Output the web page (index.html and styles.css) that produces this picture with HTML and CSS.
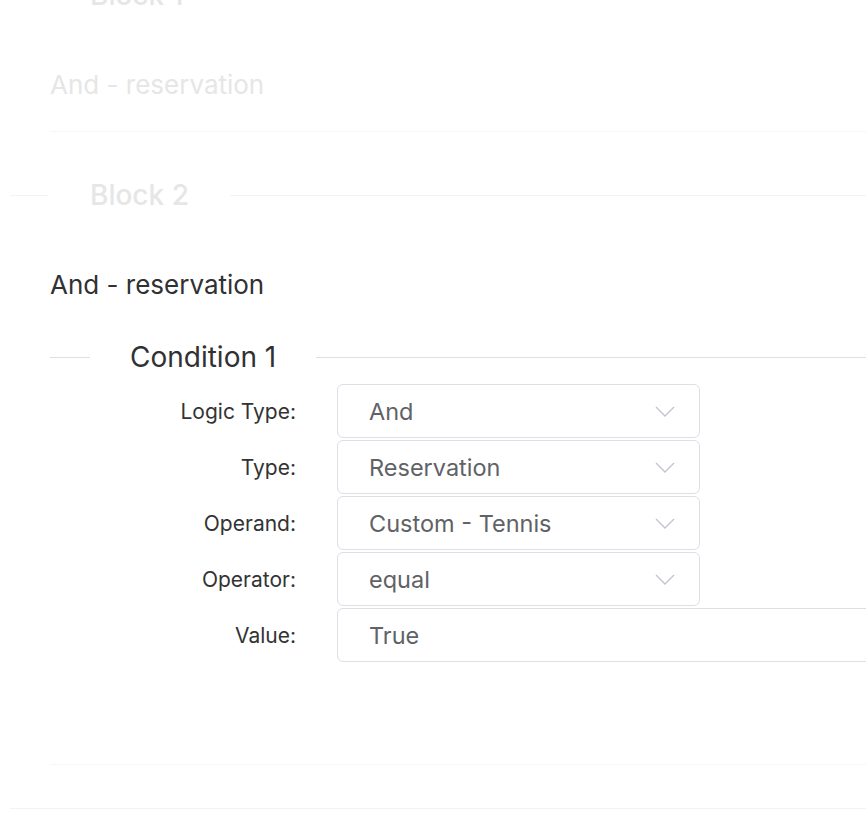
FILE: index.html
```html
<!DOCTYPE html>
<html lang="en">
<head>
<meta charset="utf-8">
<title>Rule blocks</title>
<link rel="stylesheet" href="styles.css">
</head>
<body>
<div class="page">
  <section class="block block-faded block-first">
    <div class="block-divider"><span class="block-divider-text">Block 1</span></div>
    <div class="block-body">
      <h2 class="block-title">And - reservation</h2>
    </div>
  </section>

  <section class="block">
    <div class="block-divider"><span class="block-divider-text">Block 2</span></div>
    <div class="block-body">
      <h2 class="block-title block-title-active">And - reservation</h2>
      <div class="condition">
        <div class="cond-divider"><span class="cond-divider-text">Condition 1</span></div>
        <div class="form">
          <label class="form-label">Logic Type:</label>
          <div class="select"><span class="select-value">And</span><svg class="chev" viewBox="0 0 20 11" width="20" height="11"><polyline points="1,1 10,10 19,1"/></svg></div>

          <label class="form-label">Type:</label>
          <div class="select"><span class="select-value">Reservation</span><svg class="chev" viewBox="0 0 20 11" width="20" height="11"><polyline points="1,1 10,10 19,1"/></svg></div>

          <label class="form-label">Operand:</label>
          <div class="select"><span class="select-value">Custom - Tennis</span><svg class="chev" viewBox="0 0 20 11" width="20" height="11"><polyline points="1,1 10,10 19,1"/></svg></div>

          <label class="form-label">Operator:</label>
          <div class="select"><span class="select-value">equal</span><svg class="chev" viewBox="0 0 20 11" width="20" height="11"><polyline points="1,1 10,10 19,1"/></svg></div>

          <label class="form-label">Value:</label>
          <div class="select select-wide"><span class="select-value">True</span></div>
        </div>
      </div>
    </div>
  </section>
  <div class="end-line"></div>
</div>
</body>
</html>
```

FILE: styles.css
```css
html, body {
  margin: 0;
  padding: 0;
  background: #ffffff;
  overflow: hidden;
}

body {
  font-family: Inter, "Noto Sans", "Liberation Sans", sans-serif;
  color: #303133;
}

.page {
  padding-left: 10px;
}

.block-first {
  margin-top: -20px;
}

.block + .block {
  margin-top: 48px;
}

.block-divider {
  display: flex;
  align-items: center;
  height: 30px;
}

.block-divider::before {
  content: "";
  width: 38px;
  height: 1px;
  background: #f3f3f3;
}

.block-divider::after {
  content: "";
  flex: 1;
  height: 1px;
  background: #f3f3f3;
}

.block-divider-text {
  padding: 0 41px 0 42px;
  font-size: 28px;
  line-height: 30px;
  color: #e6e6e6;
  font-weight: 500;
}

.block-body {
  margin-left: 40px;
  margin-top: 60px;
  padding-bottom: 31px;
  border-bottom: 1px solid #f7f7f7;
}

.block-title {
  margin: 0;
  font-size: 26px;
  line-height: 30px;
  font-weight: 400;
  color: #e6e6e6;
}

.block-title-active {
  color: #303133;
}

.condition {
  margin-top: 42px;
  margin-bottom: 71px;
}

.cond-divider {
  display: flex;
  align-items: center;
  height: 30px;
}

.cond-divider::before {
  content: "";
  width: 40px;
  height: 1px;
  background: #dcdfe6;
}

.cond-divider::after {
  content: "";
  flex: 1;
  height: 1px;
  background: #dcdfe6;
}

.cond-divider-text {
  padding: 0 40px;
  font-size: 28px;
  line-height: 30px;
  font-weight: 400;
  color: #303133;
}

.form {
  margin-top: 12px;
  display: grid;
  grid-template-columns: 246px auto;
  column-gap: 41px;
  row-gap: 2px;
  align-items: center;
}

.form-label {
  text-align: right;
  font-size: 21px;
  color: #333333;
}

.select {
  box-sizing: border-box;
  width: 363px;
  height: 54px;
  border: 1px solid #dcdfe6;
  border-radius: 6px;
  display: flex;
  align-items: center;
  justify-content: space-between;
  padding: 0 24px 0 31px;
  background: #fff;
}

.select-wide {
  width: 620px;
}

.select-value {
  font-size: 23.5px;
  color: #606266;
}

.chev {
  fill: none;
  stroke: #c0c4cc;
  stroke-width: 1.3;
}

.end-line {
  margin-top: 43px;
  height: 1px;
  background: #f3f3f3;
}
```
